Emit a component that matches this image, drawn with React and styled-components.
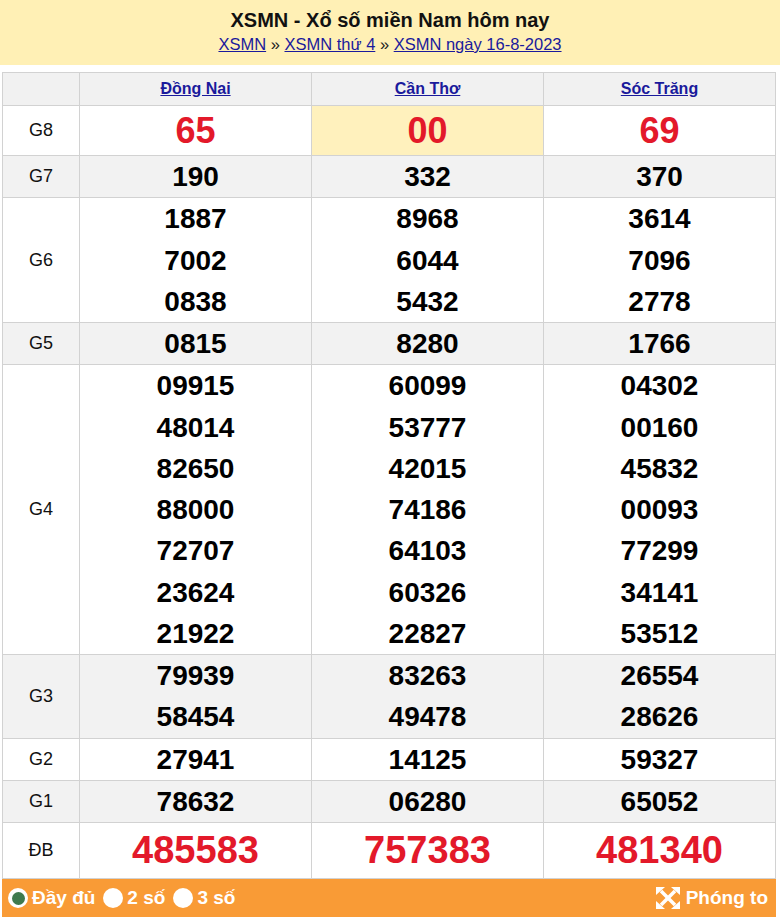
import React from 'react'
import styled, { createGlobalStyle } from 'styled-components'

const GlobalStyle = createGlobalStyle`
  html, body {
    margin: 0;
    padding: 0;
    background: #fff;
    font-family: "Liberation Sans", Arial, sans-serif;
  }
`

const provinces = ['Đồng Nai', 'Cần Thơ', 'Sóc Trăng']

const prizes = [
  { label: 'G8', big: true, red: true, values: [['65'], ['00'], ['69']], highlight: 1 },
  { label: 'G7', values: [['190'], ['332'], ['370']] },
  { label: 'G6', values: [['1887', '7002', '0838'], ['8968', '6044', '5432'], ['3614', '7096', '2778']] },
  { label: 'G5', values: [['0815'], ['8280'], ['1766']] },
  {
    label: 'G4',
    values: [
      ['09915', '48014', '82650', '88000', '72707', '23624', '21922'],
      ['60099', '53777', '42015', '74186', '64103', '60326', '22827'],
      ['04302', '00160', '45832', '00093', '77299', '34141', '53512']
    ]
  },
  { label: 'G3', values: [['79939', '58454'], ['83263', '49478'], ['26554', '28626']] },
  { label: 'G2', values: [['27941'], ['14125'], ['59327']] },
  { label: 'G1', values: [['78632'], ['06280'], ['65052']] },
  { label: 'ĐB', special: true, red: true, values: [['485583'], ['757383'], ['481340']] }
]

const ExpandIcon = () => (
  <svg width='24' height='22' viewBox='0 0 24 22'>
    <g stroke='#fff' strokeWidth='3.5'>
      <line x1='5' y1='4' x2='19' y2='18' />
      <line x1='19' y1='4' x2='5' y2='18' />
    </g>
    <g fill='#fff'>
      <polygon points='0,0 9,0 0,8' />
      <polygon points='24,0 15,0 24,8' />
      <polygon points='0,22 9,22 0,14' />
      <polygon points='24,22 15,22 24,14' />
    </g>
  </svg>
)

export default function App () {
  return (
    <Page>
      <GlobalStyle />
      <Header>
        <Title>XSMN - Xổ số miền Nam hôm nay</Title>
        <Crumbs>
          <Link>XSMN</Link> » <Link>XSMN thứ 4</Link> » <Link>XSMN ngày 16-8-2023</Link>
        </Crumbs>
      </Header>
      <Board>
        <Table>
          <colgroup>
            <col style={{ width: 77 }} />
            <col />
            <col />
            <col />
          </colgroup>
          <thead>
            <tr>
              <HeadCell />
              {provinces.map(p => (
                <HeadCell key={p}><Link $bold>{p}</Link></HeadCell>
              ))}
            </tr>
          </thead>
          <tbody>
            {prizes.map((row, i) => (
              <Row key={row.label} $grey={i % 2 === 1}>
                <Label>{row.label}</Label>
                {row.values.map((list, j) => (
                  <Cell key={j} $highlight={row.highlight === j}>
                    {list.map(v => (
                      <Num key={v} $red={row.red} $big={row.big} $special={row.special}>{v}</Num>
                    ))}
                  </Cell>
                ))}
              </Row>
            ))}
          </tbody>
        </Table>
        <Footer>
          <Options>
            <Option><Radio $on />Đầy đủ</Option>
            <Option><Radio />2 số</Option>
            <Option><Radio />3 số</Option>
          </Options>
          <Zoom><ExpandIcon />Phóng to</Zoom>
        </Footer>
      </Board>
    </Page>
  )
}

const Page = styled.div`
  width: 780px;
`

const Header = styled.div`
  background: #fff0b5;
  height: 65px;
  box-sizing: border-box;
  padding-top: 8px;
  text-align: center;
`

const Title = styled.div`
  font-size: 20px;
  line-height: 25px;
  font-weight: bold;
  color: #111;
`

const Crumbs = styled.div`
  font-size: 16.5px;
  line-height: 22px;
  color: #222;
`

const Link = styled.a`
  color: #1a1a9c;
  text-decoration: underline;
  font-weight: ${p => (p.$bold ? 'bold' : 'normal')};
  cursor: pointer;
`

const Board = styled.div`
  margin: 7px 4px 0 2px;
`

const Table = styled.table`
  width: 100%;
  border-collapse: collapse;
  table-layout: fixed;
`

const HeadCell = styled.th`
  height: 32px;
  padding: 0;
  background: #f1f1f1;
  border: 1px solid #d2d2d2;
  font-size: 16px;
  text-align: center;
  vertical-align: middle;
`

const Row = styled.tr`
  background: ${p => (p.$grey ? '#f2f2f2' : '#fff')};
`

const Label = styled.td`
  padding: 0;
  border: 1px solid #d2d2d2;
  text-align: center;
  vertical-align: middle;
  font-size: 18px;
  color: #111;
`

const Cell = styled.td`
  padding: 0;
  border: 1px solid #d2d2d2;
  text-align: center;
  vertical-align: middle;
  background: ${p => (p.$highlight ? '#fff1bd' : 'transparent')};
`

const Num = styled.div`
  font-weight: bold;
  color: ${p => (p.$red ? '#e3192a' : '#000')};
  font-size: ${p => (p.$special ? '38px' : p.$big ? '36px' : '28px')};
  line-height: ${p => (p.$special ? '55px' : p.$big ? '49px' : '41.25px')};
`

const Footer = styled.div`
  background: #f99b36;
  height: 38px;
  display: flex;
  align-items: center;
  justify-content: space-between;
  padding: 0 8px 0 6px;
  color: #fff;
  font-weight: bold;
  font-size: 19px;
`

const Options = styled.div`
  display: flex;
  align-items: center;
  gap: 8px;
`

const Option = styled.span`
  display: flex;
  align-items: center;
  gap: 4px;
`

const Radio = styled.span`
  width: 20px;
  height: 20px;
  border-radius: 50%;
  background: #fff;
  display: inline-flex;
  align-items: center;
  justify-content: center;
  &::after {
    content: '';
    width: 13px;
    height: 13px;
    border-radius: 50%;
    background: ${p => (p.$on ? '#3f7a4e' : 'transparent')};
  }
`

const Zoom = styled.span`
  display: flex;
  align-items: center;
  gap: 6px;
`
